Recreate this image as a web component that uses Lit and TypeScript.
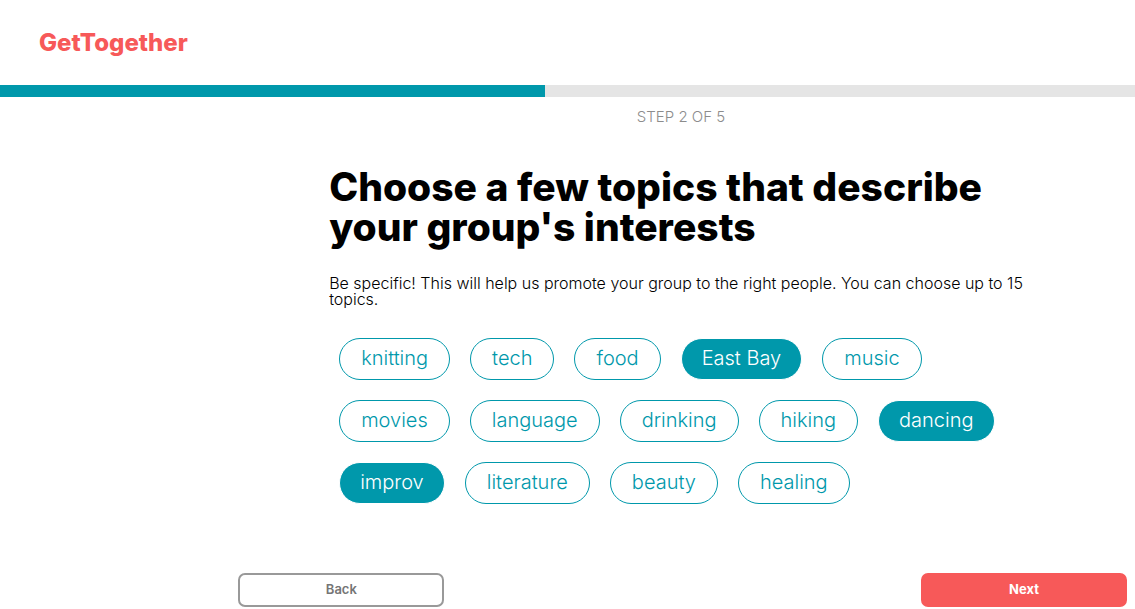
import { LitElement, html, css } from "lit";
import { customElement, state } from "lit/decorators.js";
import { classMap } from "lit/directives/class-map.js";

const TOPICS = [
  "knitting", "tech", "food", "East Bay", "music", "movies", "language",
  "drinking", "hiking", "dancing", "improv", "literature", "beauty", "healing",
];

@customElement("app-root")
export class AppRoot extends LitElement {
  @state() private selected = new Set(["East Bay", "dancing", "improv"]);
  @state() private step = 2;

  static styles = css`
    :host { display: block; font-family: Inter, sans-serif; color: #000; background: #fff; }
    * { box-sizing: border-box; }
    .header { display: flex; padding: 28px 39px 27px; }
    .brand { color: #f75959; font-size: 24px; line-height: 30px; font-weight: 800; text-decoration: none; }
    .track { height: 12px; background: #e5e5e5; }
    .fill { height: 100%; background: #0098ab; }
    .main { margin-left: 29%; margin-right: 9%; display: flex; flex-direction: column; }
    .step { margin: 11px 0 0; text-align: center; color: #8c8c8c; font-size: 15px; line-height: 18px; font-weight: 300; text-transform: uppercase; }
    .title { margin: 41px 0 0; font-size: 39px; line-height: 40px; font-weight: 800; }
    .hint { margin: 28px 0 0; font-size: 16px; line-height: 16px; font-weight: 300; }
    .topics { display: flex; flex-wrap: wrap; gap: 20px; margin: 31px 0 0; padding: 0 10px; }
    .topic { font: 300 20px/24px Inter, sans-serif; height: 42px; padding: 0 21px 2px; border: 1px solid #0098ab; border-radius: 21px; background: #fff; color: #0098ab; cursor: pointer; }
    .topic.on { padding: 0 20px 2px; background: #0098ab; color: #fff; border-color: #fff; }
    .actions { display: flex; justify-content: space-between; margin: 69px 8px 0 21%; }
    .action { font: 600 13px/16px Inter, sans-serif; width: 206px; height: 34px; padding: 0 0 2px; border-radius: 7px; border: 2px solid #999; background: #fff; color: #757575; cursor: pointer; }
    .next { background: #f75959; border-color: #f75959; color: #fff; font-weight: 700; }
  `;

  private toggle(topic: string) {
    const next = new Set(this.selected);
    if (!next.delete(topic)) next.add(topic);
    this.selected = next;
  }

  render() {
    return html`
      <header class="header"><a class="brand" href="#">GetTogether</a></header>
      <div class="track"><div class="fill" style="width:${this.step * 24}%"></div></div>
      <main class="main">
        <p class="step">Step ${this.step} of 5</p>
        <h1 class="title">Choose a few topics that describe your group's interests</h1>
        <p class="hint">Be specific! This will help us promote your group to the right people. You can choose up to 15 topics.</p>
        <div class="topics">
          ${TOPICS.map((t) => html`<button type="button" class=${classMap({ topic: true, on: this.selected.has(t) })}
            aria-pressed=${this.selected.has(t)} @click=${() => this.toggle(t)}>${t}</button>`)}
        </div>
      </main>
      <footer class="actions">
        <button type="button" class="action">Back</button>
        <button type="button" class="action next">Next</button>
      </footer>
    `;
  }
}
